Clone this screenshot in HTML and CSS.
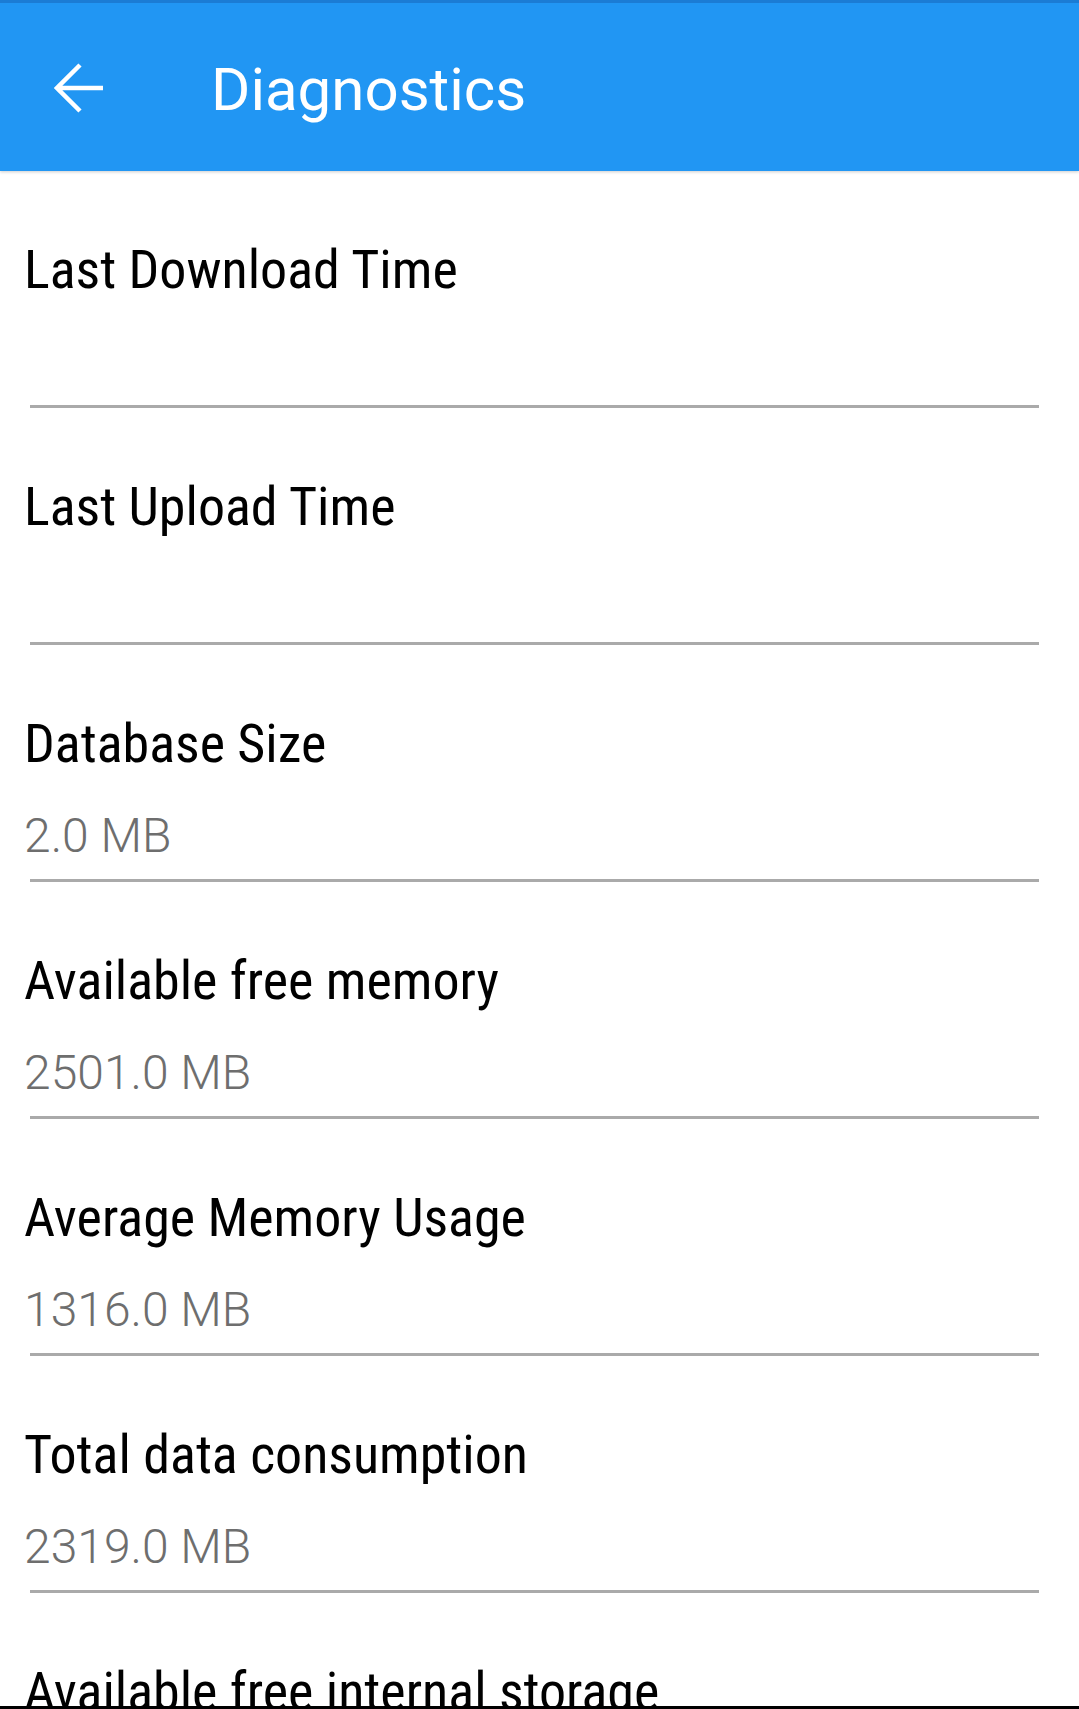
FILE: index.html
```html
<!DOCTYPE html>
<html lang="en">

<head>
  <meta charset="UTF-8">
  <meta name="viewport" content="width=device-width, initial-scale=1" />
  <title>Diagnostics</title>
  <link rel="stylesheet" href="styles.css">
</head>

<body>

  <div class="screen">
    <div class="app-bar">
      <svg class="back-icon" width="52" height="52" viewBox="0 0 52 52">
        <path d="M26 3 L3 26 L26 49 M3 26 H49" fill="none" stroke="#fff" stroke-width="4.5" stroke-linejoin="miter" />
      </svg>
      <span class="title">Diagnostics</span>
    </div>

    <div class="list">
      <div class="row">
        <div class="label">Last Download Time</div>
        <div class="value"></div>
        <div class="divider"></div>
      </div>
      <div class="row">
        <div class="label">Last Upload Time</div>
        <div class="value"></div>
        <div class="divider"></div>
      </div>
      <div class="row">
        <div class="label">Database Size</div>
        <div class="value">2.0 MB</div>
        <div class="divider"></div>
      </div>
      <div class="row">
        <div class="label">Available free memory</div>
        <div class="value">2501.0 MB</div>
        <div class="divider"></div>
      </div>
      <div class="row">
        <div class="label">Average Memory Usage</div>
        <div class="value">1316.0 MB</div>
        <div class="divider"></div>
      </div>
      <div class="row">
        <div class="label">Total data consumption</div>
        <div class="value">2319.0 MB</div>
        <div class="divider"></div>
      </div>
      <div class="row">
        <div class="label">Available free internal storage</div>
        <div class="value">0.0 MB</div>
        <div class="divider"></div>
      </div>
    </div>
  </div>

</body>

</html>
```

FILE: styles.css
```css
body {
  margin: 0;
  background: #fff;
  font-family: "Roboto Condensed", Roboto, sans-serif;
}

.screen {
  height: 1709px;
  overflow: hidden;
  box-sizing: border-box;
  border-bottom: 3px solid #000;
}

.app-bar {
  display: flex;
  align-items: center;
  height: 168px;
  border-top: 3px solid #1b7cd4;
  background-color: #2196f3;
  box-shadow: 0 1px 3px rgba(0, 0, 0, 0.2);
  position: relative;
}

.back-icon {
  margin-left: 54px;
  margin-top: 2px;
  flex: none;
}

.title {
  margin-left: 105px;
  margin-top: 6px;
  color: #fff;
  font-family: Roboto, sans-serif;
  font-size: 60px;
  line-height: 70px;
}

.row {
  padding-top: 67px;
}

.label {
  padding-left: 24px;
  font-size: 54px;
  font-stretch: 85%;
  line-height: 64px;
  color: #000;
  white-space: nowrap;
}

.value {
  margin-top: 32px;
  padding-left: 24px;
  height: 55px;
  font-family: Roboto, sans-serif;
  font-weight: 300;
  font-size: 48px;
  line-height: 55px;
  color: #6e6e6e;
}

.divider {
  margin: 16px 40px 0 30px;
  height: 3px;
  background-color: #aaa;
}
```
